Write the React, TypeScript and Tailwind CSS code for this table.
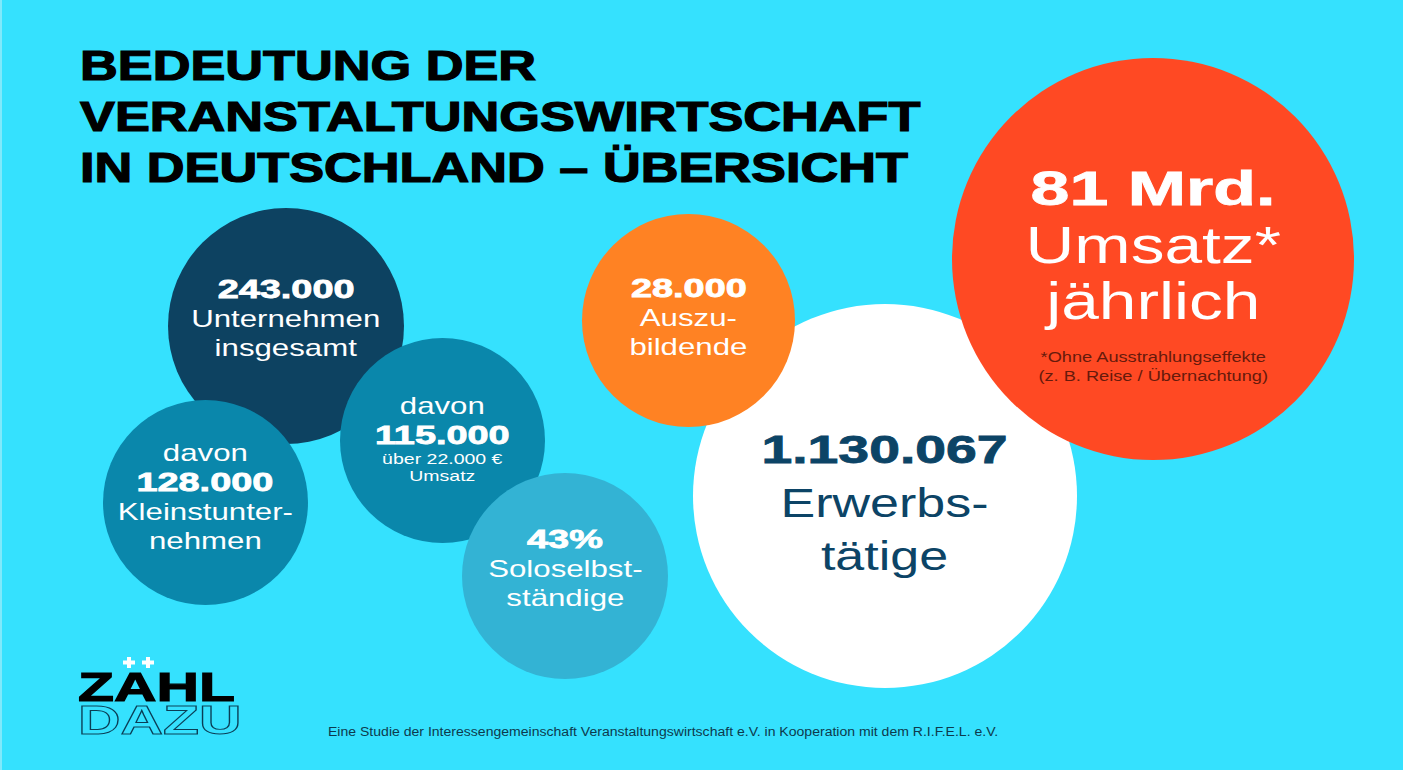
import type { ReactNode } from "react";

type Line = { text: string; kind: "bold" | "regular" | "small" };

type Bubble = {
  key: string;
  box: string;
  bg: string;
  tone: string;
  shift: string;
  size: "sm" | "lg" | "xl";
  lines: Line[];
  extra?: ReactNode;
};

const bubbles: Bubble[] = [
  {
    key: "total",
    box: "left-[166px] top-[208px] size-[236px]",
    bg: "bg-[#0d4261]",
    tone: "text-white",
    shift: "pb-[16px]",
    size: "sm",
    lines: [
      { text: "243.000", kind: "bold" },
      { text: "Unternehmen", kind: "regular" },
      { text: "insgesamt", kind: "regular" },
    ],
  },
  {
    key: "klein",
    box: "left-[101px] top-[400px] size-[205px]",
    bg: "bg-[#0a87ab]",
    tone: "text-white",
    shift: "pb-[12px]",
    size: "sm",
    lines: [
      { text: "davon", kind: "regular" },
      { text: "128.000", kind: "bold" },
      { text: "Kleinstunter-", kind: "regular" },
      { text: "nehmen", kind: "regular" },
    ],
  },
  {
    key: "umsatz",
    box: "left-[338px] top-[338px] size-[205px]",
    bg: "bg-[#0a87ab]",
    tone: "text-white",
    shift: "pb-[6px]",
    size: "sm",
    lines: [
      { text: "davon", kind: "regular" },
      { text: "115.000", kind: "bold" },
      { text: "über 22.000 €", kind: "small" },
      { text: "Umsatz", kind: "small" },
    ],
  },
  {
    key: "solo",
    box: "left-[460px] top-[473px] size-[206px]",
    bg: "bg-[#33b3d4]",
    tone: "text-white",
    shift: "pb-[16px]",
    size: "sm",
    lines: [
      { text: "43%", kind: "bold" },
      { text: "Soloselbst-", kind: "regular" },
      { text: "ständige", kind: "regular" },
    ],
  },
  {
    key: "jobs",
    box: "left-[691px] top-[304px] size-[384px]",
    bg: "bg-white",
    tone: "text-[#0c4466]",
    shift: "pt-[14px]",
    size: "lg",
    lines: [
      { text: "1.130.067", kind: "bold" },
      { text: "Erwerbs-", kind: "regular" },
      { text: "tätige", kind: "regular" },
    ],
  },
  {
    key: "azubi",
    box: "left-[580px] top-[214px] size-[213px]",
    bg: "bg-[#ff8223]",
    tone: "text-white",
    shift: "pb-[7px]",
    size: "sm",
    lines: [
      { text: "28.000", kind: "bold" },
      { text: "Auszu-", kind: "regular" },
      { text: "bildende", kind: "regular" },
    ],
  },
  {
    key: "revenue",
    box: "left-[950px] top-[58px] size-[402px]",
    bg: "bg-[#ff4923]",
    tone: "text-white",
    shift: "pt-[28px]",
    size: "xl",
    lines: [
      { text: "81 Mrd.", kind: "bold" },
      { text: "Umsatz*", kind: "regular" },
      { text: "jährlich", kind: "regular" },
    ],
    extra: (
      <div className="mt-[19px] text-[14px] leading-[19px] text-[#661a0c]">
        <div>*Ohne Ausstrahlungseffekte</div>
        <div>(z. B. Reise / Übernachtung)</div>
      </div>
    ),
  },
];

export default function App() {
  return (
    <div className="relative flex h-[770px] w-[1403px] flex-col overflow-hidden border-l-2 border-[#7fe9fb] bg-[#35e1fe] font-['Liberation_Sans',Arial,sans-serif]">
      <header className="relative z-10 pl-[78px] pt-[40px]">
        <h1 className="origin-left scale-x-[1.245] text-[42px] font-bold leading-[51px] text-black [-webkit-text-stroke:1.2px_black]">
          BEDEUTUNG DER
          <br />
          VERANSTALTUNGSWIRTSCHAFT
          <br />
          IN DEUTSCHLAND – ÜBERSICHT
        </h1>
      </header>

      {bubbles.map((bubble) => (
        <BubbleCircle key={bubble.key} {...bubble} />
      ))}

      <div className="flex-1" />

      <footer className="relative z-10 flex items-end pb-[34px] pl-[76px]">
        <Logo />
        <p className="mb-[-3px] ml-[88px] origin-left scale-x-[1.17] whitespace-nowrap text-[12px] leading-[14px] text-[#0d3a4d]">
          Eine Studie der Interessengemeinschaft Veranstaltungswirtschaft e.V. in Kooperation mit dem R.I.F.E.L. e.V.
        </p>
      </footer>
    </div>
  );
}

function BubbleCircle({ box, bg, tone, shift, size, lines, extra }: Bubble) {
  return (
    <div className={`absolute flex items-center justify-center rounded-full ${box} ${bg} ${tone}`}>
      <div className={`flex scale-x-[1.3] flex-col items-center whitespace-nowrap text-center ${shift}`}>
        {lines.map((line) => (
          <BubbleLine key={line.text} line={line} size={size} />
        ))}
        {extra}
      </div>
    </div>
  );
}

function BubbleLine({ line, size }: { line: Line; size: Bubble["size"] }) {
  if (line.kind === "bold") {
    const bold =
      size === "xl"
        ? "text-[48px] leading-[56px]"
        : size === "lg"
          ? "text-[38px] leading-[53px]"
          : "text-[26px] leading-[30px]";
    return (
      <div className={`inline-block scale-x-[1.12] font-bold [-webkit-text-stroke:0.8px_currentColor] ${bold}`}>
        {line.text}
      </div>
    );
  }
  if (line.kind === "small") {
    return <div className="text-[15px] leading-[17px] first-of-type:mt-[8px]">{line.text}</div>;
  }
  const regular =
    size === "xl"
      ? "text-[52px] leading-[56px]"
      : size === "lg"
        ? "text-[40px] leading-[53px]"
        : "text-[24px] leading-[29px]";
  return <div className={regular}>{line.text}</div>;
}

function Logo() {
  // two-line wordmark kept in one block; the umlaut dots are drawn as plus signs
  return (
    <div className="relative h-[66px] w-[162px] font-bold">
      <svg className="absolute left-[44px] top-[-13px]" width="36" height="11" viewBox="0 0 36 11">
        <path d="M5 0h4v3.5h4v4H9V11H5V7.5H1v-4h4z" fill="white" />
        <path d="M24 0h4v3.5h4v4h-4V11h-4V7.5h-4v-4h4z" fill="white" />
      </svg>
      <div className="origin-top-left scale-x-[2.03] scale-y-[1.39] text-[29px] leading-[24px] text-black [-webkit-text-stroke:0.8px_black]">
        ZAHL
        <br />
        <span className="text-transparent [-webkit-text-stroke:0.7px_#0a3d55]">DAZU</span>
      </div>
    </div>
  );
}
